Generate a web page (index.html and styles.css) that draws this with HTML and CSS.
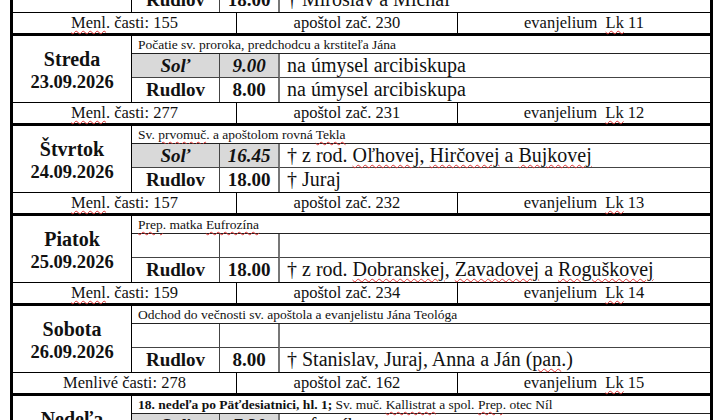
FILE: index.html
```html
<!DOCTYPE html>
<html lang="sk">
<head>
<meta charset="utf-8">
<title>Rozpis bohoslužieb</title>
<link rel="stylesheet" href="styles.css">
</head>
<body>
<div class="sheet">

  <section class="block">
    <div class="day"><div class="dname">Utorok</div><div class="ddate">22.09.2026</div></div>
    <div class="sub">Sv. veľkomuč. Eustatios a spol.</div>
    <div class="place grey ital">Soľ</div>
    <div class="time grey ital">17.00</div>
    <div class="intent">za farníkov</div>
    <div class="place last">Rudlov</div>
    <div class="time last">18.00</div>
    <div class="intent last">† Miroslav a Michal</div>
  </section>
  <div class="menl">
    <div class="mc"><span class="sp">Menl</span>. časti: 155</div>
    <div class="mc">apoštol zač. 230</div>
    <div class="mc">evanjelium&nbsp; <span class="sp">Lk</span> 11</div>
  </div>

  <section class="block">
    <div class="day"><div class="dname">Streda</div><div class="ddate">23.09.2026</div></div>
    <div class="sub">Počatie sv. proroka, predchodcu a krstiteľa Jána</div>
    <div class="place grey ital">Soľ</div>
    <div class="time grey ital">9.00</div>
    <div class="intent">na úmysel arcibiskupa</div>
    <div class="place last">Rudlov</div>
    <div class="time last">8.00</div>
    <div class="intent last">na úmysel arcibiskupa</div>
  </section>
  <div class="menl">
    <div class="mc"><span class="sp">Menl</span>. časti: 277</div>
    <div class="mc">apoštol zač. 231</div>
    <div class="mc">evanjelium&nbsp; <span class="sp">Lk</span> 12</div>
  </div>

  <section class="block">
    <div class="day"><div class="dname">Štvrtok</div><div class="ddate">24.09.2026</div></div>
    <div class="sub">Sv. <span class="sp">prvomuč</span>. a apoštolom rovná <span class="sp">Tekla</span></div>
    <div class="place grey ital">Soľ</div>
    <div class="time grey ital">16.45</div>
    <div class="intent">† z rod. <span class="sp">Oľhovej</span>, <span class="sp">Hirčovej</span> a <span class="sp">Bujkovej</span></div>
    <div class="place last">Rudlov</div>
    <div class="time last">18.00</div>
    <div class="intent last">† Juraj</div>
  </section>
  <div class="menl">
    <div class="mc"><span class="sp">Menl</span>. časti: 157</div>
    <div class="mc">apoštol zač. 232</div>
    <div class="mc">evanjelium&nbsp; <span class="sp">Lk</span> 13</div>
  </div>

  <section class="block">
    <div class="day"><div class="dname">Piatok</div><div class="ddate">25.09.2026</div></div>
    <div class="sub"><span class="sp">Prep</span>. matka <span class="sp">Eufrozína</span></div>
    <div class="place"></div>
    <div class="time"></div>
    <div class="intent"></div>
    <div class="place last">Rudlov</div>
    <div class="time last">18.00</div>
    <div class="intent last">† z rod. <span class="sp">Dobranskej</span>, <span class="sp">Zavadovej</span> a <span class="sp">Roguškovej</span></div>
  </section>
  <div class="menl">
    <div class="mc"><span class="sp">Menl</span>. časti: 159</div>
    <div class="mc">apoštol zač. 234</div>
    <div class="mc">evanjelium&nbsp; <span class="sp">Lk</span> 14</div>
  </div>

  <section class="block">
    <div class="day"><div class="dname">Sobota</div><div class="ddate">26.09.2026</div></div>
    <div class="sub">Odchod do večnosti sv. apoštola a evanjelistu Jána Teológa</div>
    <div class="place"></div>
    <div class="time"></div>
    <div class="intent"></div>
    <div class="place last">Rudlov</div>
    <div class="time last">8.00</div>
    <div class="intent last">† Stanislav, Juraj, Anna a Ján (<span class="sp">pan</span>.)</div>
  </section>
  <div class="menl">
    <div class="mc">Menlivé časti: 278</div>
    <div class="mc">apoštol zač. 162</div>
    <div class="mc">evanjelium&nbsp; <span class="sp">Lk</span> 15</div>
  </div>

  <section class="block">
    <div class="day"><div class="dname">Nedeľa</div><div class="ddate">27.09.2026</div></div>
    <div class="sub"><b>18. nedeľa po Päťdesiatnici, hl. 1;</b> Sv. muč. <span class="sp">Kallistrat</span> a spol. <span class="sp">Prep</span>. otec Níl</div>
    <div class="place grey ital">Soľ</div>
    <div class="time grey ital">7.30</div>
    <div class="intent">za farníkov</div>
    <div class="place last">Rudlov</div>
    <div class="time last">9.00</div>
    <div class="intent last">za farníkov</div>
  </section>

</div>
</body>
</html>
```

FILE: styles.css
```css
* { box-sizing: border-box; }

html, body {
  margin: 0;
  padding: 0;
  background: #fff;
  overflow: hidden;
}

body {
  font-family: "Liberation Serif", "Times New Roman", serif;
  color: #111;
}

.sheet {
  width: 703px;
  margin: -57px 0 0 10px;
  border-left: 3px solid #000;
  border-right: 3px solid #000;
}

.block {
  display: grid;
  grid-template-columns: 119px 88px 60px 1fr;
  grid-template-rows: 18px 24px 24px;
  border-top: 3px solid #000;
}

.day {
  grid-row: 1 / 4;
  grid-column: 1;
  border-right: 1px solid #000;
  display: flex;
  flex-direction: column;
  justify-content: center;
  align-items: center;
  font-weight: bold;
  padding-top: 2px;
}

.dname {
  font-size: 20px;
  line-height: 24px;
}

.ddate {
  font-size: 18.5px;
  line-height: 23px;
}

.sub {
  grid-column: 2 / 5;
  border-bottom: 1px solid #222;
  font-size: 13.5px;
  line-height: 17px;
  padding-left: 6px;
  white-space: nowrap;
}

.place, .time, .intent {
  border-bottom: 1px solid #444;
  font-size: 19px;
  line-height: 23px;
  white-space: nowrap;
}

.place, .time {
  font-weight: bold;
  text-align: center;
  border-right: 1px solid #444;
}

.time {
  border-right: 2px solid #777;
}

.intent {
  font-size: 20px;
  padding-left: 7px;
}

.last {
  border-bottom: none;
}

.grey {
  background: #d9d9d9;
}

.ital {
  font-style: italic;
}

.menl {
  display: grid;
  grid-template-columns: 223px 221px 1fr;
  height: 21px;
  border-top: 1px solid #000;
}

.mc {
  font-size: 16.5px;
  line-height: 20px;
  text-align: center;
  white-space: nowrap;
}

.mc + .mc {
  border-left: 1px solid #000;
}

.sp {
  text-decoration: underline wavy #d33;
  text-decoration-thickness: 1px;
  text-underline-offset: 2px;
}
```
